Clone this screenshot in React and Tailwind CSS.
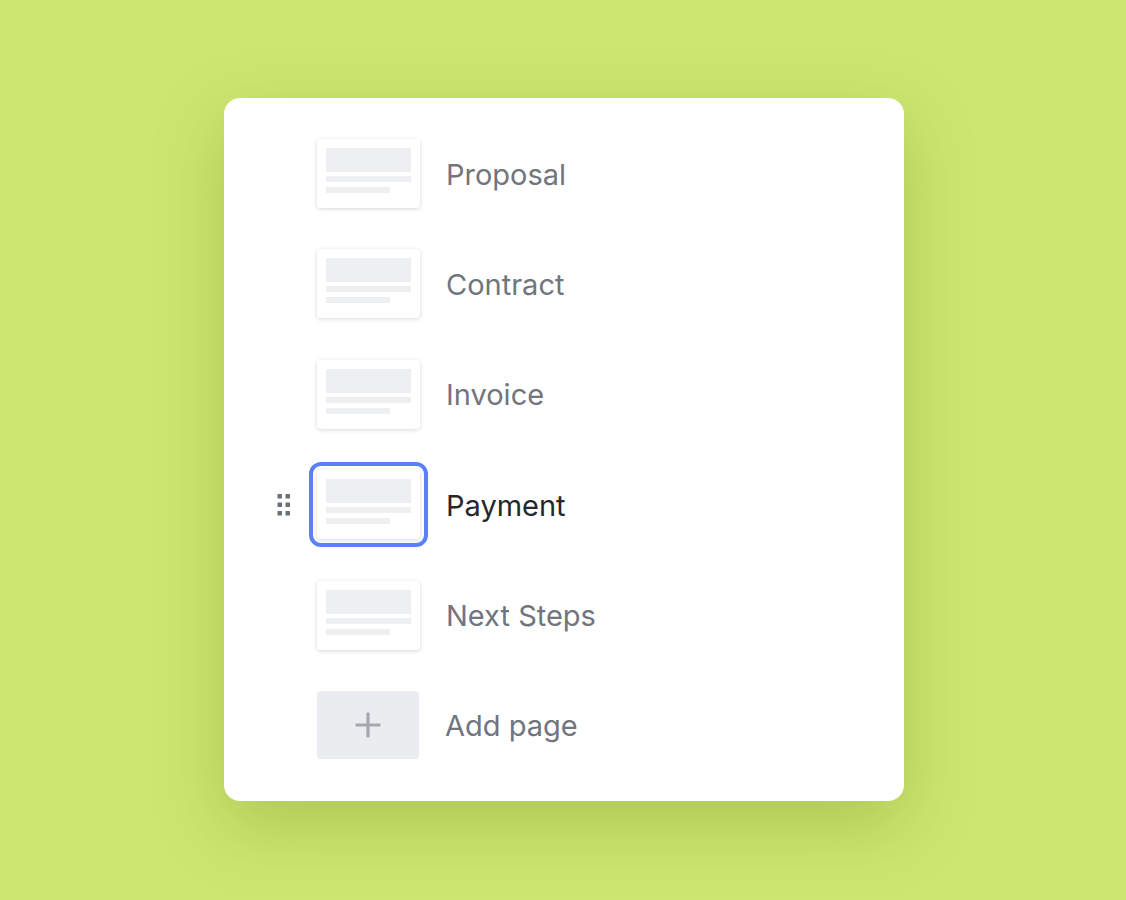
import React from "react";

function Thumb({ selected }) {
  return (
    <div
      className={
        "relative w-[103px] h-[69px] shrink-0 rounded-[4px] bg-white shadow-[0_1px_4px_rgba(0,0,0,0.16)] pt-[9px] px-[9px] flex flex-col " +
        (selected ? "outline-4 outline-offset-4 outline-[#5b80fa]" : "")
      }
    >
      <div className="h-[24px] w-full bg-[#eeeff1]" />
      <div className="mt-[4px] h-[6px] w-full bg-[#eeeff1]" />
      <div className="mt-[5px] h-[6px] w-[64px] bg-[#eeeff1]" />
    </div>
  );
}

function Handle() {
  return (
    <svg
      className="absolute left-[-40px] top-[24px]"
      width="13"
      height="22"
      viewBox="0 0 13 22"
    >
      {[0, 8.5, 17].map((y) =>
        [0, 8].map((x) => (
          <rect key={x + "-" + y} x={x + 0.5} y={y} width="4.5" height="4.5" rx="0.6" fill="#6b7078" />
        ))
      )}
    </svg>
  );
}

export default function App() {
  const items = [
    { label: "Proposal" },
    { label: "Contract" },
    { label: "Invoice" },
    { label: "Payment", selected: true },
    { label: "Next Steps" },
  ];
  return (
    <div
      className="w-[1126px] h-[900px] bg-[#cde671] flex items-start justify-start"
      style={{ fontFamily: "Inter, 'Noto Sans', sans-serif" }}
    >
      <div className="ml-[224px] mt-[98px] w-[680px] h-[703px] rounded-[16px] bg-white shadow-[0_24px_70px_rgba(90,120,0,0.28)] pl-[93px] pt-[41px] flex flex-col gap-[41.4px]">
        {items.map((it) => (
          <div key={it.label} className="relative flex items-center h-[69px] gap-[26px]">
            {it.selected && <Handle />}
            <Thumb selected={it.selected} />
            <span
              className={
                "text-[29px] leading-none pt-[1px] " +
                (it.selected ? "text-[#24272c]" : "text-[#70757e]")
              }
            >
              {it.label}
            </span>
          </div>
        ))}
        <div className="flex items-center h-[68px] gap-[26px]">
          <div className="w-[102px] h-[68px] shrink-0 rounded-[4px] bg-[#ebecef] flex items-center justify-center">
            <svg width="28" height="28" viewBox="0 0 28 28">
              <path d="M14 1.5V26.5M1.5 14H26.5" stroke="#a3a8b0" strokeWidth="3.2" />
            </svg>
          </div>
          <span className="text-[29px] leading-none pt-[1px] text-[#70757e]">Add page</span>
        </div>
      </div>
    </div>
  );
}
